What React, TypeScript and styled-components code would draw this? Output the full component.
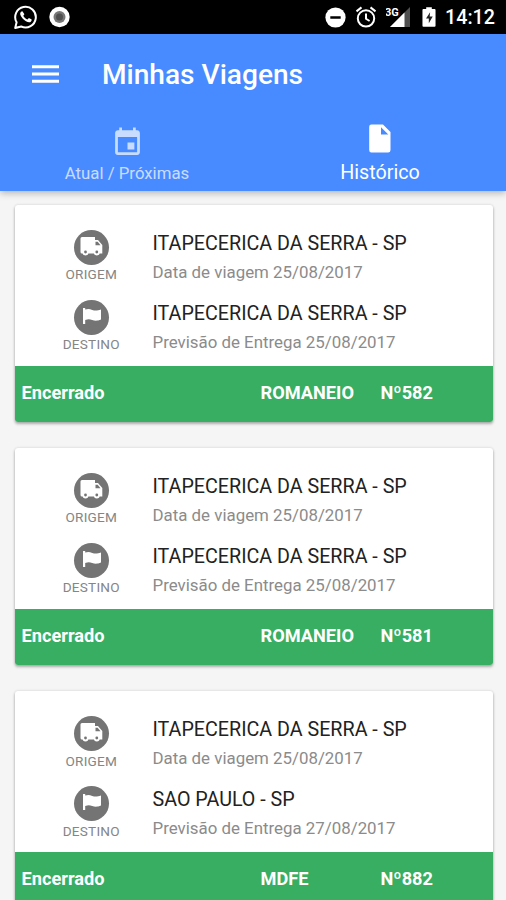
import React from "react";
import styled, { createGlobalStyle } from "styled-components";
import { MdEvent } from "react-icons/md";

const GlobalStyle = createGlobalStyle`
  * { box-sizing: border-box; }
  body { margin: 0; background: #f5f5f5; font-family: Roboto, sans-serif; overflow: hidden; }
`;

const Screen = styled.div`
  width: 506px;
  height: 900px;
  overflow: hidden;
  background: #f5f5f5;
`;

const StatusBar = styled.div`
  display: flex;
  align-items: center;
  justify-content: space-between;
  height: 34px;
  padding: 0 11px 0 13px;
  background: #000;
  color: #fff;
`;

const StatusGroup = styled.div<{ $gap: number }>`
  display: flex;
  align-items: center;
  gap: ${(p) => p.$gap}px;
  height: 34px;
`;

const Clock = styled.span`
  font-size: 19.7px;
  font-weight: 500;
  line-height: 34px;
  padding-top: 2px;
`;

const Header = styled.header`
  position: relative;
  height: 157px;
  background: #488aff;
  color: #fff;
  box-shadow: 0 2px 7px rgba(0, 0, 0, 0.28);
`;

const Toolbar = styled.div`
  display: flex;
  align-items: center;
  height: 80px;
  padding-left: 32px;
`;

const MenuButton = styled.button`
  display: flex;
  width: 70px;
  padding: 0;
  border: 0;
  background: none;
`;

const Title = styled.h1`
  margin: 0;
  padding-top: 1px;
  font-size: 28.1px;
  font-weight: 500;
  line-height: 40px;
`;

const Tabs = styled.nav`
  display: grid;
  grid-template-columns: 1fr 1fr;
  height: 77px;
`;

const Tab = styled.div<{ $active?: boolean }>`
  display: flex;
  flex-direction: column;
  align-items: center;
  padding-top: ${(p) => (p.$active ? 8 : 12)}px;
  padding-left: 1px;
  opacity: ${(p) => (p.$active ? 1 : 0.7)};
`;

const TabIcon = styled.span`
  display: flex;
  align-items: center;
  height: 32px;
`;

const TabLabel = styled.span<{ $active?: boolean }>`
  font-size: ${(p) => (p.$active ? 19.7 : 16.8)}px;
  line-height: 24px;
  padding-top: ${(p) => (p.$active ? 7 : 3)}px;
`;

const List = styled.main`
  display: flex;
  flex-direction: column;
  gap: 26px;
  padding: 14px 13.5px 0 14.5px;
`;

const Card = styled.article`
  flex: none;
  height: 217.2px;
  border-radius: 3px;
  overflow: hidden;
  background: #fff;
  box-shadow: 0 2px 3px rgba(0, 0, 0, 0.28), 0 0 3px rgba(0, 0, 0, 0.14);
`;

const Stops = styled.div`
  height: 161px;
  padding-top: 24px;
`;

const Stop = styled.div`
  display: grid;
  grid-template-columns: 138px 1fr;
  height: 70px;
`;

const Marker = styled.div`
  display: flex;
  flex-direction: column;
  align-items: center;
  padding: 0.6px 0 0 15.5px;
`;

const Disc = styled.span`
  display: flex;
  width: 35px;
  height: 35px;
  border-radius: 50%;
  background: #747474;
`;

const MarkerLabel = styled.span`
  padding-top: 0.6px;
  color: #858585;
  font-size: 13.6px;
  letter-spacing: 0.2px;
  line-height: 18px;
`;

const Place = styled.div`
  padding-top: 1px;
  color: #222;
  font-size: 19.7px;
  line-height: 28px;
`;

const Detail = styled.div`
  color: #8b8b8b;
  font-size: 16.87px;
  line-height: 28px;
`;

const Footer = styled.footer`
  display: grid;
  grid-template-columns: 239px 120px 1fr;
  height: 56.2px;
  padding-left: 7px;
  background: #37ae61;
  color: #fff;
  font-size: 18.2px;
  font-weight: 700;
  line-height: 53px;
`;

const WhatsAppIcon = () => (
  <svg width="25" height="26" viewBox="0 0 25 26" fill="none">
    <path d="M2.2 24 3.6 18.3A10.3 10.3 0 1 1 8.2 22.5Z" stroke="#fff" strokeWidth="2" strokeLinejoin="round" />
    <path d="M9.4 7.2 8 7.8C6.5 9 7 11.5 9.6 14.5c2.8 3.1 6.3 4.6 8 3.4 1.3-.9 1.3-2.3.8-2.6l-2.5-1.2-1.4 1.5c-1.7-.7-3.5-2.2-4.2-3.9l1.1-1.4Z" fill="#fff" />
  </svg>
);

const RecordIcon = () => (
  <svg width="22" height="22" viewBox="0 0 22 22">
    <circle cx="11.5" cy="11" r="10.2" fill="#fff" />
    <circle cx="11.5" cy="11" r="6" fill="#777" />
    <circle cx="11.5" cy="11" r="3.5" fill="#505050" />
  </svg>
);

const BlockIcon = () => (
  <svg width="21" height="21" viewBox="0 0 21 21">
    <circle cx="10.5" cy="10.5" r="10.1" fill="#fff" />
    <path d="M5.3 10.5h10.4" stroke="#000" strokeWidth="2.5" />
  </svg>
);

const AlarmIcon = () => (
  <svg width="22" height="22" viewBox="0 0 22 22" fill="none" stroke="#fff" strokeWidth="2">
    <circle cx="11" cy="12.4" r="8.2" />
    <path d="M11 7.5v5.3l3.6 2.2M1.5 5.4l5-4M20.5 5.4l-5-4" />
  </svg>
);

const SignalText = styled.text`
  font-family: Roboto, sans-serif;
  font-size: 11px;
  font-weight: 700;
`;

const SignalIcon = () => (
  <svg width="27" height="24" viewBox="1 0 27 24" fill="#fff">
    <path d="M5 22 25 2V22Z" fill="#505050" />
    <path d="M5 22 19.5 7.5V22Z" />
    <SignalText x="0" y="10.5" stroke="#000" strokeWidth="2" paintOrder="stroke">3G</SignalText>
  </svg>
);

const BatteryIcon = () => (
  <svg width="14" height="22" viewBox="0 0 15 22">
    <path d="M1.5 2.5H4.5V.5h6v2h3q1 0 1 1v17q0 1-1 1h-12q-1 0-1-1v-17q0-1 1-1Z" fill="#fff" />
    <path d="M8.7 6 4.3 12.7h3v5l4.2-7.2H8.2Z" fill="#222" />
  </svg>
);

const MenuIcon = () => (
  <svg width="27" height="18" viewBox="0 0 27 18" stroke="#fff" strokeWidth="3">
    <path d="M0 1.8h27M0 9h27M0 16.2h27" />
  </svg>
);

const FileIcon = () => (
  <svg width="22" height="29" viewBox="0 0 22 29">
    <path fillRule="evenodd" d="M2.3.5H14L21.5 8v18q0 2.5-2.4 2.5H2.3Q.2 28.5.2 26V2.8Q.2.5 2.3.5ZM12 3.2V10.5H19.3Z" fill="#fff" />
  </svg>
);

const TruckIcon = () => (
  <svg width="35" height="35" viewBox="0 0 35 35">
    <path d="M8 7H21V10H24L28.3 15V23.5H8Q6.5 23.5 6.5 22V8.5Q6.5 7 8 7Z" fill="#fff" />
    <path d="M21.5 11.7h2.2l2.8 3.5h-5Z" fill="#747474" />
    <circle cx="11.5" cy="22.5" r="2.9" fill="#fff" />
    <circle cx="22.8" cy="22.5" r="2.9" fill="#fff" />
    <circle cx="11.5" cy="22" r="1.4" fill="#747474" />
    <circle cx="22.8" cy="22" r="1.4" fill="#747474" />
  </svg>
);

const FlagIcon = () => (
  <svg width="35" height="35" viewBox="0 0 35 35" fill="#fff">
    <path d="M9 8h2.2v1.5c3-.9 4.500-.6 7 .4 2.800 1 5 .9 8.800-.4v10c-3.500 1.500-6 1.500-8.800.5-2.500-.9-4-1-7-.1V24H9Z" />
  </svg>
);

const trips = [
  { destination: "ITAPECERICA DA SERRA - SP", delivery: "25/08/2017", kind: "ROMANEIO", number: "582" },
  { destination: "ITAPECERICA DA SERRA - SP", delivery: "25/08/2017", kind: "ROMANEIO", number: "581" },
  { destination: "SAO PAULO - SP", delivery: "27/08/2017", kind: "MDFE", number: "882" },
];

export default function App() {
  return (
    <Screen>
      <GlobalStyle />
      <StatusBar>
        <StatusGroup $gap={10}>
          <WhatsAppIcon />
          <RecordIcon />
        </StatusGroup>
        <StatusGroup $gap={9}>
          <BlockIcon />
          <AlarmIcon />
          <SignalIcon />
          <BatteryIcon />
          <Clock>14:12</Clock>
        </StatusGroup>
      </StatusBar>
      <Header>
        <Toolbar>
          <MenuButton aria-label="Menu">
            <MenuIcon />
          </MenuButton>
          <Title>Minhas Viagens</Title>
        </Toolbar>
        <Tabs>
          <Tab>
            <TabIcon>
              <MdEvent size={33} />
            </TabIcon>
            <TabLabel>Atual / Próximas</TabLabel>
          </Tab>
          <Tab $active>
            <TabIcon>
              <FileIcon />
            </TabIcon>
            <TabLabel $active>Histórico</TabLabel>
          </Tab>
        </Tabs>
      </Header>
      <List>
        {trips.map((trip) => (
          <Card key={trip.number}>
            <Stops>
              <Stop>
                <Marker>
                  <Disc><TruckIcon /></Disc>
                  <MarkerLabel>ORIGEM</MarkerLabel>
                </Marker>
                <div>
                  <Place>ITAPECERICA DA SERRA - SP</Place>
                  <Detail>Data de viagem 25/08/2017</Detail>
                </div>
              </Stop>
              <Stop>
                <Marker>
                  <Disc><FlagIcon /></Disc>
                  <MarkerLabel>DESTINO</MarkerLabel>
                </Marker>
                <div>
                  <Place>{trip.destination}</Place>
                  <Detail>Previsão de Entrega {trip.delivery}</Detail>
                </div>
              </Stop>
            </Stops>
            <Footer>
              <span>Encerrado</span>
              <span>{trip.kind}</span>
              <span>Nº{trip.number}</span>
            </Footer>
          </Card>
        ))}
      </List>
    </Screen>
  );
}
